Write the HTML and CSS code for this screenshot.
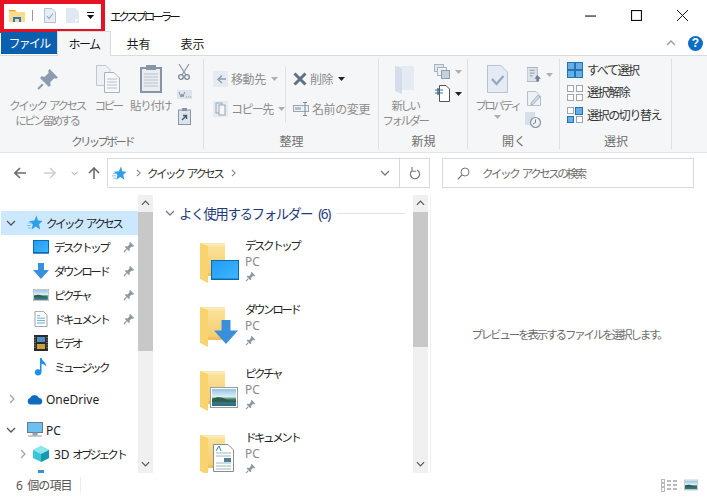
FILE: index.html
```html
<!DOCTYPE html>
<html lang="ja">
<head>
<meta charset="utf-8">
<title>エクスプローラー</title>
<link rel="stylesheet" href="styles.css">
</head>
<body>
<svg class="defs" aria-hidden="true">
  <defs>
    <linearGradient id="fb" x1="0" y1="0" x2="0" y2="1"><stop offset="0" stop-color="#fbe3a0"/><stop offset="1" stop-color="#f4cb68"/></linearGradient>
    <linearGradient id="bl" x1="0" y1="0" x2="1" y2="1"><stop offset="0" stop-color="#1f9cf5"/><stop offset="1" stop-color="#43b6ff"/></linearGradient>
    <linearGradient id="sky" x1="0" y1="0" x2="0" y2="1"><stop offset="0" stop-color="#8fc3e8"/><stop offset=".45" stop-color="#dfeef5"/><stop offset=".6" stop-color="#3f7f62"/><stop offset="1" stop-color="#2f6f92"/></linearGradient>
    <symbol id="folder" viewBox="0 0 40 40">
      <path d="M0 0H25V33H0Z" fill="url(#fb)"/>
      <path d="M0 0L8 3V40L0 36Z" fill="#f8d36f"/>
      <path d="M8 3L0 0H25V3Z" fill="#fbe9b4"/>
      <path d="M8 30H25V33H8Z" fill="#efc25f"/>
    </symbol>
    <symbol id="pin" viewBox="0 0 12 12">
      <path d="M7 .8L11.2 5 10 5.8 8.8 5.4 6.6 7.6 6.8 9.6 5.8 10 2 6.2 2.4 5.2 4.4 5.4 6.6 3.2 6.2 2Z" fill="#8f99a3"/>
      <path d="M3.6 8.2L1 11" stroke="#8f99a3" stroke-width="1.2"/>
    </symbol>
    <symbol id="picture" viewBox="0 0 28 21">
      <rect x=".5" y=".5" width="27" height="20" fill="#fff" stroke="#9c9c9c"/>
      <rect x="2" y="2" width="24" height="17" fill="url(#sky)"/>
      <path d="M2 12C8 9 12 10 18 13L26 14V15H2Z" fill="#2c5f4c"/>
    </symbol>
    <symbol id="star" viewBox="0 0 16 16">
      <path d="M9.5 .5L11 5.6 15.6 6 12 9.3 13.2 14.6 8.8 11.6 4.6 14.6 5.8 9.6 2 6.2 7.4 5.6Z" fill="#2f9fe8"/>
      <path d="M1 8H5M0 10.5H4M1 13H4.5" stroke="#7dc4f2" stroke-width="1"/>
    </symbol>
    <symbol id="arrow" viewBox="0 0 16 16">
      <path d="M5 0H11V7H16L8 16 0 7H5Z" fill="#3a8fdd"/>
    </symbol>
    <symbol id="doc" viewBox="0 0 16 20">
      <path d="M.5.5H11L15.5 5V19.5H.5Z" fill="#fff" stroke="#8c8c8c"/>
      <path d="M3 6H7M3 9H13M3 12H13M3 15H13" stroke="#3e9bc8"/>
    </symbol>
    <symbol id="chev-d" viewBox="0 0 10 6"><path d="M1 1L5 5 9 1" fill="none" stroke="currentColor" stroke-width="1.3"/></symbol>
    <symbol id="chev-r" viewBox="0 0 6 10"><path d="M1 1L5 5 1 9" fill="none" stroke="currentColor" stroke-width="1.3"/></symbol>
    <symbol id="chev-u" viewBox="0 0 10 6"><path d="M1 5L5 1 9 5" fill="none" stroke="currentColor" stroke-width="1.3"/></symbol>
    <symbol id="tri" viewBox="0 0 7 4"><path d="M0 0H7L3.5 4Z" fill="currentColor"/></symbol>
    <symbol id="pad" viewBox="0 0 16 16"><g fill="#69aee3" stroke="#1f75bd"><rect x=".5" y=".5" width="7" height="7"/><rect x="8.5" y=".5" width="7" height="7"/><rect x=".5" y="8.5" width="7" height="7"/><rect x="8.5" y="8.5" width="7" height="7"/></g></symbol>
    <symbol id="pad-o" viewBox="0 0 16 16"><g fill="#fff" stroke="#a5a5a5"><rect x=".5" y=".5" width="6" height="6"/><rect x="9.5" y=".5" width="6" height="6"/><rect x=".5" y="9.5" width="6" height="6"/><rect x="9.5" y="9.5" width="6" height="6"/></g></symbol>
    <symbol id="pad-i" viewBox="0 0 16 16"><g stroke="#a5a5a5" fill="#fff"><rect x=".5" y="9.5" width="6" height="6" fill="#69aee3" stroke="#1f75bd"/><rect x="9.5" y="9.5" width="6" height="6"/><rect x=".5" y=".5" width="6" height="6"/></g><rect x="8.5" y=".5" width="7" height="7" fill="#69aee3" stroke="#1f75bd"/></symbol>
  </defs>
</svg>

<div class="window">
  <header class="titlebar">
    <div class="qat">
      <svg class="i-qat-folder" viewBox="0 0 17 14"><path d="M0 1H6L8 3H16V13H0Z" fill="#f6cf6a"/><path d="M0 3H16V13H0Z" fill="#fbdc8c"/><path d="M0 1H6L7 2H0Z" fill="#e8a93a"/><path d="M4 13V8H12V13H10V10H6V13Z" fill="#2a78c2"/></svg>
      <span class="qat-sep"></span>
      <svg class="i-qat-doc" viewBox="0 0 12 15"><path d="M.5.5H8L11.5 4V14.5H.5Z" fill="#e6edf6" stroke="#b4c2d4"/><path d="M3 8L5 10.5 9 5.5" fill="none" stroke="#8fa6c0" stroke-width="1.1"/></svg>
      <svg class="i-qat-doc2" viewBox="0 0 13 15"><path d="M0 0H9L13 4V15H0Z" fill="#dfe8f3"/><path d="M9 15V11H13Z" fill="#f3f6fa"/></svg>
      <svg class="i-qat-tri" viewBox="0 0 7 7"><path d="M0 0H7V1H0ZM0 3H7L3.5 7Z" fill="#111"/></svg>
    </div>
    <div class="title">エクスプローラー</div>
    <div class="winbtns">
      <svg class="wb" viewBox="0 0 10 10"><path d="M0 5.5H10" stroke="#111"/></svg>
      <svg class="wb" viewBox="0 0 10 10"><rect x=".5" y=".5" width="9" height="9" fill="none" stroke="#111"/></svg>
      <svg class="wb" viewBox="0 0 10 10"><path d="M0 0L10 10M10 0L0 10" stroke="#111" stroke-width=".9"/></svg>
    </div>
  </header>

  <nav class="tabs">
    <div class="tab tab-file">ファイル</div>
    <div class="tab tab-home">ホーム</div>
    <div class="tab tab-share">共有</div>
    <div class="tab tab-view">表示</div>
    <div class="tabs-right">
      <svg class="i-ribbon-up"><use href="#chev-u"/></svg>
      <div class="help">?</div>
    </div>
  </nav>

  <div class="ribbon">
    <section class="group g1">
      <div class="group-body">
        <div class="big b-pin">
          <svg class="ic-pin" viewBox="0 0 20 20"><path d="M12 0L20 8 18.4 9.4 16.4 8.8 12.6 12.6 13 16 11.2 17 3 8.8 4 7 7.4 7.4 11.2 3.6 10.6 1.6Z" fill="#8c9bb0"/><path d="M5.5 14.5L1 19" stroke="#8c9bb0" stroke-width="2"/></svg>
          <div class="lbl tight">クイック アクセス<br>にピン留めする</div>
        </div>
        <div class="big b-copy">
          <svg class="ic-big" viewBox="0 0 24 28"><path d="M.5.5H10L14 4.5V20.5H.5Z" fill="#eef1f5" stroke="#c0c7d0"/><path d="M8.5 7.5H18L23.5 13V27.5H8.5Z" fill="#f7f8fa" stroke="#a9b2bd"/><path d="M11 14H21M11 17H21M11 20H21M11 23H21" stroke="#b8c0ca"/></svg>
          <div class="lbl tight">コピー</div>
        </div>
        <div class="big b-paste">
          <svg class="ic-big" viewBox="0 0 22 28"><rect x="1" y="3" width="20" height="24" fill="#e9edf2" stroke="#8795a8" stroke-width="2"/><rect x="6" y="0" width="10" height="5" fill="#8795a8"/><path d="M4 9H18M4 12H18M4 15H18M4 18H18M4 21H18" stroke="#b8c2cf"/></svg>
          <div class="lbl tight-kanji">貼り付け</div>
        </div>
        <div class="smallcol">
          <svg class="ic-cut" viewBox="0 0 12 16"><path d="M1 0L8 11M11 0L4 11" stroke="#8e99a6" stroke-width="1.2"/><circle cx="3" cy="13" r="2.3" fill="none" stroke="#7c8999" stroke-width="1.3"/><circle cx="9" cy="13" r="2.3" fill="none" stroke="#7c8999" stroke-width="1.3"/></svg>
          <svg class="ic-path" viewBox="0 0 15 9"><rect width="15" height="9" fill="#dfe4ea"/><path d="M2 2L4 7 5 4 6 7 7.6 2M9 7H10M11 7H12M13 7H14" stroke="#6f8096" fill="none" stroke-width=".8"/></svg>
          <svg class="ic-short" viewBox="0 0 13 17"><rect x=".5" y="2" width="12" height="14.5" fill="#dde3ea" stroke="#8795a8" stroke-width="1"/><rect x="4" y="0" width="5" height="3" fill="#8795a8"/><path d="M4 12L8 8M5 7.5H8.5V11" stroke="#49596c" stroke-width="1.4" fill="none"/></svg>
        </div>
      </div>
      <div class="group-label group-label-kana">クリップボード</div>
    </section>

    <section class="group g2">
      <div class="group-body">
        <div class="rows r-move">
          <div class="row">
            <svg class="ic-14" viewBox="0 0 15 16"><path d="M0 0H15V16H0Z" fill="#e6ebf1"/><path d="M13 8H6M9 4.5L5 8.5 9 12" stroke="#8ca0b6" stroke-width="1.5" fill="none"/></svg>
            <span class="lbl wide">移動先</span><svg class="tri"><use href="#tri"/></svg>
          </div>
          <div class="row">
            <svg class="ic-14" viewBox="0 0 15 16"><rect width="15" height="16" fill="#e6ebf1"/><rect x="3" y="2" width="6" height="10" fill="none" stroke="#9aa7b6"/><rect x="6" y="4" width="6" height="10" fill="#f4f6f8" stroke="#9aa7b6"/></svg>
            <span class="lbl wide wide-kana">コピー先</span><svg class="tri"><use href="#tri"/></svg>
          </div>
        </div>
        <span class="vsep"></span>
        <div class="rows r-del">
          <div class="row">
            <svg class="ic-x" viewBox="0 0 14 14"><path d="M1.5 1.5L12.5 12.5M12.5 1.5L1.5 12.5" stroke="#5f7184" stroke-width="3"/></svg>
            <span class="lbl wide">削除</span><svg class="tri tri-on"><use href="#tri"/></svg>
          </div>
          <div class="row">
            <svg class="ic-ren" viewBox="0 0 16 14"><rect x=".5" y="3.5" width="15" height="6" fill="#eef1f4" stroke="#9aa7b6"/><rect x="2" y="5" width="6" height="3" fill="#b4bfcb"/><path d="M10 .5H14M12 .5V13.5M10 13.5H14" stroke="#7d8b9b"/></svg>
            <span class="lbl wide">名前の変更</span>
          </div>
        </div>
      </div>
      <div class="group-label">整理</div>
    </section>

    <section class="group g3">
      <div class="group-body">
        <div class="big b-new">
          <svg class="ic-newf" viewBox="0 0 20 28"><path d="M0 0H19V24H0Z" fill="#e4ebf3"/><path d="M0 0L7 2.5V28L0 25Z" fill="#d3deea"/></svg>
          <div class="lbl tight">新しい<br>フォルダー</div>
        </div>
        <div class="smallcol2">
          <div class="sm-row">
            <svg class="ic-16" viewBox="0 0 16 15"><rect x=".5" y=".5" width="9" height="7" fill="#dfe5ec" stroke="#a9b4c1"/><rect x="3.5" y="3.5" width="9" height="8" fill="#eef1f5" stroke="#a9b4c1"/><rect x="7.5" y="6.5" width="8" height="8" fill="#c7d0da" stroke="#8f9cab"/></svg>
            <svg class="tri"><use href="#tri"/></svg>
          </div>
          <div class="sm-row">
            <svg class="ic-16b" viewBox="0 0 16 17"><path d="M5.5.5H12L15.5 4V16.5H5.5Z" fill="#fff" stroke="#555"/><path d="M1 5H9M1 8H9" stroke="#2a78c2"/><path d="M4 3V10" stroke="#333"/></svg>
            <svg class="tri tri-on"><use href="#tri"/></svg>
          </div>
        </div>
      </div>
      <div class="group-label">新規</div>
    </section>

    <section class="group g4">
      <div class="group-body">
        <div class="big b-prop">
          <svg class="ic-prop" viewBox="0 0 21 28"><path d="M.5.5H14L20.5 7V27.5H.5Z" fill="#e4ebf4" stroke="#b7c3d1"/><path d="M5 14L9.5 19 16.5 11" fill="none" stroke="#96a9bf" stroke-width="2.4"/></svg>
          <div class="lbl tight">プロパティ</div>
          <svg class="tri tri-center"><use href="#tri"/></svg>
        </div>
        <div class="smallcol3">
          <div class="sm-row">
            <svg class="ic-14b" viewBox="0 0 15 15"><rect width="11" height="15" fill="#dde3ea" stroke="#aab5c2"/><path d="M3 3H8M3 6H8M3 9H6" stroke="#8795a8"/><path d="M11 8L15 12H13V15H10V12H8Z" fill="#6e7f93"/></svg>
            <svg class="tri"><use href="#tri"/></svg>
          </div>
          <svg class="ic-14b" viewBox="0 0 14 15"><path d="M.5.5H9L13.5 5V14.5H.5Z" fill="#eef2f6" stroke="#b4c0cd"/><path d="M4 12L11 4 13 6 6 13.5H4Z" fill="#ccd6e1" stroke="#9aa8b8" stroke-width=".7"/></svg>
          <svg class="ic-16c" viewBox="0 0 16 16"><rect width="10" height="13" fill="#d7dfe8"/><circle cx="10.5" cy="10.5" r="5" fill="#eef1f4" stroke="#8695a6" stroke-width="1.2"/><path d="M10.5 7.5V10.5L8 12" stroke="#6e7f93" fill="none"/></svg>
        </div>
      </div>
      <div class="group-label">開く</div>
    </section>

    <section class="group g5">
      <div class="group-body">
        <div class="rows r-sel">
          <div class="row row-on"><svg class="ic-16p"><use href="#pad"/></svg><span class="lbl sel">すべて選択</span></div>
          <div class="row row-on"><svg class="ic-16p"><use href="#pad-o"/></svg><span class="lbl sel">選択解除</span></div>
          <div class="row row-on"><svg class="ic-16p"><use href="#pad-i"/></svg><span class="lbl sel">選択の切り替え</span></div>
        </div>
      </div>
      <div class="group-label">選択</div>
    </section>
  </div>

  <div class="addrbar">
    <div class="navbtns">
      <svg class="nb nb-back" viewBox="0 0 12 12"><path d="M12 6H1M6 1L1 6 6 11" fill="none" stroke="#6c6c6c" stroke-width="1.6"/></svg>
      <svg class="nb nb-fwd" viewBox="0 0 12 12"><path d="M0 6H11M6 1L11 6 6 11" fill="none" stroke="#d0d0d0" stroke-width="1.6"/></svg>
      <svg class="nb-chev"><use href="#chev-d"/></svg>
      <svg class="nb nb-up" viewBox="0 0 12 12"><path d="M6 12V1M1 6L6 1 11 6" fill="none" stroke="#6c6c6c" stroke-width="1.6"/></svg>
    </div>
    <div class="addr">
      <svg class="addr-star"><use href="#star"/></svg>
      <svg class="addr-c"><use href="#chev-r"/></svg>
      <span class="tight addr-text">クイック アクセス</span>
      <svg class="addr-c"><use href="#chev-r"/></svg>
      <svg class="addr-down"><use href="#chev-d"/></svg>
      <div class="addr-refresh">
        <svg class="i-refresh" viewBox="0 0 12 13"><path d="M6 2.5A4.6 4.6 0 1 1 1.6 6" transform="rotate(30 6 7)" fill="none" stroke="#777" stroke-width="1.2"/><path d="M3.4 0V4.4H7.6" transform="translate(-.4 -.2)" fill="none" stroke="#777" stroke-width="1.1"/></svg>
      </div>
    </div>
    <div class="search">
      <svg class="i-search" viewBox="0 0 13 13"><circle cx="8" cy="5" r="4" fill="none" stroke="#777"/><path d="M5 8L.7 12.3" stroke="#777" stroke-width="1.1"/></svg>
      <span class="tight search-text">クイック アクセスの検索</span>
    </div>
  </div>

  <main class="main">
    <aside class="navpane">
      <ul class="tree">
        <li class="t t-root t-selected"><svg class="exp-d"><use href="#chev-d"/></svg><svg class="ic-star"><use href="#star"/></svg><span class="tight">クイック アクセス</span></li>
        <li class="t t-child"><svg class="ti" viewBox="0 0 16 14"><rect x=".5" y=".5" width="15" height="12" fill="url(#bl)" stroke="#0b6ab0"/><path d="M0 13H16" stroke="#0b6ab0" stroke-width="1.5"/></svg><span class="tight">デスクトップ</span><svg class="tpin"><use href="#pin"/></svg></li>
        <li class="t t-child"><svg class="ti"><use href="#arrow"/></svg><span class="tight">ダウンロード</span><svg class="tpin"><use href="#pin"/></svg></li>
        <li class="t t-child"><svg class="ti"><use href="#picture"/></svg><span class="tight">ピクチャ</span><svg class="tpin"><use href="#pin"/></svg></li>
        <li class="t t-child"><svg class="ti"><use href="#doc"/></svg><span class="tight">ドキュメント</span><svg class="tpin"><use href="#pin"/></svg></li>
        <li class="t t-child"><svg class="ti" viewBox="0 0 14 16"><rect width="14" height="16" fill="#2a2a2a"/><rect x="3" y="2" width="8" height="5" fill="#4d8fc4"/><rect x="3" y="9" width="8" height="5" fill="#c9a23c"/><path d="M1 2V14M13 2V14" stroke="#bbb" stroke-dasharray="1 1.5"/></svg><span class="tight">ビデオ</span></li>
        <li class="t t-child"><svg class="ti ti-music" viewBox="0 0 12 17"><path d="M5 0H6.5C7 3 11 4 11 8 9.5 6 8 5.6 6.5 5.4V13.5A3.2 3 0 1 1 5 11Z" fill="#1e90e6"/></svg><span class="tight">ミュージック</span></li>
        <li class="t t-root t-drive"><svg class="exp-r"><use href="#chev-r"/></svg><svg class="ic-star" viewBox="0 0 16 10"><path d="M3.5 10A3.4 3.4 0 0 1 3 3.4 5 5 0 0 1 12 3.4 3.4 3.4 0 0 1 13 10Z" fill="#0f6cbd"/></svg><span>OneDrive</span></li>
        <li class="t t-root t-pc"><svg class="exp-d"><use href="#chev-d"/></svg><svg class="ic-star" viewBox="0 0 16 16"><rect x=".5" y=".5" width="15" height="10" fill="#6cc0f0" stroke="#6a7b8a"/><path d="M6 11H10V13H6ZM1 14H15" stroke="#8899a8" fill="#a7b4bf"/></svg><span>PC</span></li>
        <li class="t t-child t-sub"><svg class="exp-r"><use href="#chev-r"/></svg><svg class="ti" viewBox="0 0 16 16"><path d="M8 0L16 4V12L8 16 0 12V4Z" fill="#39c6d8"/><path d="M8 8L16 4V12L8 16Z" fill="#1797b0"/><path d="M8 8L0 4 8 0 16 4Z" fill="#8ee6ee"/></svg><span class="t-3d"><span class="latin">3D </span><span class="tight">オブジェクト</span></span></li>
        <li class="t t-child"><svg class="ti"><use href="#arrow"/></svg></li>
      </ul>
      <div class="sb">
        <svg class="sb-a"><use href="#chev-u"/></svg>
        <div class="sb-thumb sb-thumb-nav"></div>
        <div class="sb-rest"></div>
        <svg class="sb-a"><use href="#chev-d"/></svg>
      </div>
    </aside>

    <section class="content">
      <div class="list">
        <div class="group-head">
          <svg class="gh-chev"><use href="#chev-d"/></svg>
          <span class="gh-title">よく使用するフォルダー (6)</span>
          <span class="gh-line"></span>
        </div>
        <div class="item">
          <div class="thumb">
            <svg class="f"><use href="#folder"/></svg>
            <svg class="ov ov-desk" viewBox="0 0 28 20"><rect x=".5" y=".5" width="27" height="19" fill="url(#bl)" stroke="#0b6ab0"/><path d="M0 19H28" stroke="#0b6ab0"/></svg>
          </div>
          <div class="meta"><div class="name tight">デスクトップ</div><div class="sub">PC</div><svg class="mpin"><use href="#pin"/></svg></div>
        </div>
        <div class="item">
          <div class="thumb">
            <svg class="f"><use href="#folder"/></svg>
            <svg class="ov ov-down"><use href="#arrow"/></svg>
          </div>
          <div class="meta"><div class="name tight">ダウンロード</div><div class="sub">PC</div><svg class="mpin"><use href="#pin"/></svg></div>
        </div>
        <div class="item">
          <div class="thumb">
            <svg class="f"><use href="#folder"/></svg>
            <svg class="ov ov-pic"><use href="#picture"/></svg>
          </div>
          <div class="meta"><div class="name tight">ピクチャ</div><div class="sub">PC</div><svg class="mpin"><use href="#pin"/></svg></div>
        </div>
        <div class="item">
          <div class="thumb">
            <svg class="f"><use href="#folder"/></svg>
            <svg class="ov ov-doc" viewBox="0 0 21 28"><path d="M.5.5H15L20.5 6V27.5H.5Z" fill="#fff" stroke="#8c8c8c"/><path d="M3 9H18M3 12H18M3 19H18M3 22H18M3 25H18" stroke="#9db6c6"/><rect x="11" y="14" width="7" height="4" fill="#4d7f8f"/><path d="M3 7L6 2 8 7" stroke="#2b8bc7" fill="none"/></svg>
          </div>
          <div class="meta"><div class="name tight">ドキュメント</div><div class="sub">PC</div><svg class="mpin"><use href="#pin"/></svg></div>
        </div>
      </div>
      <div class="sb">
        <svg class="sb-a"><use href="#chev-u"/></svg>
        <div class="sb-thumb sb-thumb-list"></div>
        <div class="sb-rest"></div>
        <svg class="sb-a"><use href="#chev-d"/></svg>
      </div>
    </section>

    <section class="preview"><span class="tight">プレビューを表示するファイルを選択します。</span></section>
  </main>

  <footer class="status">
    <span class="count">6 個の項目</span>
    <span class="status-sep"></span>
    <div class="views">
      <svg class="v-details" viewBox="0 0 16 13"><path d="M.5.5H3.5V3.5H.5ZM.5 4.5H3.5V7.5H.5ZM.5 8.5H3.5V12.5H.5Z" fill="none" stroke="#777" stroke-dasharray="1 1"/><path d="M6 2H10M12 2H16M6 6H10M12 6H16M6 10H10M12 10H16" stroke="#777"/></svg>
      <svg class="v-tiles"><use href="#picture"/></svg>
    </div>
  </footer>
</div>

<div class="qat-highlight"></div>
</body>
</html>
```

FILE: styles.css
```css
* { box-sizing: border-box; }
html, body { margin: 0; padding: 0; }
body {
  width: 707px;
  height: 497px;
  overflow: hidden;
  background: #fff;
  font-family: "Noto Sans", "Noto Sans CJK JP", sans-serif;
  font-size: 12px;
  color: #1a1a1a;
  position: relative;
}
svg { display: block; flex: none; }
.defs { width: 0; height: 0; position: absolute; }
.window { display: flex; flex-direction: column; height: 497px; }

.tight { font-size: 11.5px; letter-spacing: -2.45px; word-spacing: 3px; white-space: nowrap; }
.tight-kanji { font-size: 11.5px; letter-spacing: -1.3px; white-space: nowrap; }
.latin { font-size: 12px; letter-spacing: -.2px; }
.t-3d .tight { letter-spacing: -2.7px; }

/* title bar */
.titlebar { height: 31px; display: flex; align-items: center; flex: none; }
.qat { display: flex; align-items: center; width: 110px; padding-left: 9px; }
.i-qat-folder { width: 17px; height: 14px; }
.qat-sep { width: 1px; height: 11px; background: #9a9a9a; margin: 0 0 0 6px; }
.i-qat-doc { width: 12px; height: 15px; margin-left: 11px; }
.i-qat-doc2 { width: 13px; height: 15px; margin-left: 10px; }
.i-qat-tri { width: 7px; height: 7px; margin-left: 8px; }
.title { font-size: 11.5px; letter-spacing: -3px; color: #111; white-space: nowrap; }
.winbtns { margin-left: auto; display: flex; gap: 35px; padding-right: 19px; }
.wb { width: 11px; height: 11px; }

/* tabs */
.tabs { height: 24px; display: flex; align-items: flex-end; flex: none; position: relative; z-index: 1; }
.tab { height: 23px; display: flex; align-items: center; justify-content: center; font-size: 12px; }
.tab-file { width: 56px; margin-left: 1px; background: #0a60ae; color: #fff; letter-spacing: -1.8px; height: 22px; margin-bottom: 1px; }
.tab-home { width: 54px; background: #f5f6f7; border: 1px solid #dadbdc; border-bottom: 0; letter-spacing: -1.5px; margin-bottom: -1px; height: 25px; }
.tab-share { width: 54px; padding-left: 1px; }
.tab-view { width: 54px; padding-left: 1px; }
.tabs-right { margin-left: auto; display: flex; align-items: center; gap: 12px; padding-right: 4px; height: 24px; }
.i-ribbon-up { width: 10px; height: 6px; color: #9c9c9c; }
.help { width: 15px; height: 15px; border-radius: 50%; background: #0a6fc4; color: #fff; font-family: "Liberation Sans", sans-serif; font-weight: 700; font-size: 12px; line-height: 15px; text-align: center; }

/* ribbon */
.ribbon { height: 98px; flex: none; display: flex; background: #f5f6f7; border-top: 1px solid #dadbdc; border-bottom: 1px solid #e4e5e6; }
.group { display: flex; flex-direction: column; padding: 3px 0 2px; position: relative; }
.group::after { content: ""; position: absolute; right: 0; top: 3px; bottom: 3px; width: 1px; background: #e0e1e2; }
.group-body { flex: 1; display: flex; min-height: 0; }
.group-label { text-align: center; font-size: 12px; line-height: 16px; color: #6f6f6f; white-space: nowrap; }
.group-label-kana { font-size: 11.5px; letter-spacing: -2.7px; }
.g1 { width: 204px; }
.g2 { width: 175px; }
.g3 { width: 89px; }
.g4 { width: 92px; }
.g5 { width: 112px; }
.lbl { color: #8c8c8c; line-height: 15px; white-space: nowrap; }
.big { display: flex; flex-direction: column; align-items: center; text-align: center; }
.big .lbl { margin-top: 9px; }
.ic-pin { width: 21px; height: 21px; margin-top: 10px; margin-bottom: 4px; }
.ic-big { width: 24px; height: 28px; margin-top: 6px; }
.b-pin { width: 84px; margin-left: 5px; }
.b-pin .lbl { margin-top: 4px; }
.b-copy { width: 38px; }
.b-copy .lbl { margin-top: 5px; }
.b-paste { width: 47px; margin-left: 0; }
.b-paste .lbl { margin-top: 5px; }
.b-paste .ic-big { width: 22px; }
.smallcol { display: flex; flex-direction: column; align-items: center; width: 18px; margin-left: 1px; padding-top: 5px; }
.ic-cut { width: 12px; height: 16px; }
.ic-path { width: 15px; height: 9px; margin-top: 10px; }
.ic-short { width: 13px; height: 17px; margin-top: 9px; }

.rows { display: flex; flex-direction: column; }
.row { display: flex; align-items: center; height: 30px; }
.lbl.wide { font-size: 12px; margin-left: 3px; letter-spacing: -.4px; }
.lbl.wide-kana { letter-spacing: -1.6px; }
.r-move { width: 81px; padding: 5px 0 0 9px; }
.vsep { width: 1px; height: 56px; background: #e0e1e2; margin-top: 8px; }
.r-del { padding: 5px 0 0 7px; }
.ic-14 { width: 15px; height: 16px; }
.ic-x { width: 14px; height: 14px; }
.ic-ren { width: 16px; height: 14px; }
.tri { width: 7px; height: 4px; color: #b0b0b0; margin-left: 5px; }
.tri-on { color: #222; }
.tri-center { margin: 2px auto 0; }

.b-new { width: 52px; }
.ic-newf { width: 20px; height: 28px; margin-top: 7px; }
.b-new .lbl { margin-top: 4px; }
.smallcol2 { padding: 5px 0 0 3px; display: flex; flex-direction: column; gap: 6px; }
.sm-row { display: flex; align-items: center; }
.ic-16 { width: 16px; height: 15px; }
.ic-16b { width: 16px; height: 17px; }

.b-prop { width: 59px; }
.ic-prop { width: 21px; height: 28px; margin-top: 6px; }
.b-prop .lbl { margin-top: 5px; }
.smallcol3 { padding-top: 8px; display: flex; flex-direction: column; gap: 9px; }
.ic-14b { width: 14px; height: 15px; }
.ic-16c { width: 16px; height: 16px; margin-left: -2px; margin-top: -3px; }

.r-sel { padding: 0 0 0 7px; }
.row-on { height: 22.5px; }
.ic-16p { width: 16px; height: 16px; }
.lbl.sel { color: #333; font-size: 12px; letter-spacing: -1.4px; margin-left: 4px; }

/* address bar */
.addrbar { height: 42px; flex: none; display: flex; align-items: flex-start; padding-top: 5px; }
.navbtns { display: flex; align-items: center; height: 30px; width: 107px; padding-left: 14px; }
.nb { width: 12px; height: 12px; }
.nb-fwd { margin-left: 18px; }
.nb-chev { width: 7px; height: 5px; margin-left: 15px; color: #9a9a9a; }
.nb-up { margin-left: 10px; }
.addr { width: 323px; height: 30px; display: flex; align-items: center; border: 1px solid #d9d9d9; padding-left: 4px; }
.addr-star { width: 15px; height: 15px; }
.addr-c { width: 5px; height: 8px; color: #7a7a7a; margin-left: 9px; }
.addr-text { margin-left: 6px; color: #333; }
.addr-down { width: 10px; height: 6px; color: #7a7a7a; margin-left: auto; }
.addr-refresh { width: 30px; height: 28px; margin-left: 9px; border-left: 1px solid #d9d9d9; display: flex; align-items: center; justify-content: center; }
.i-refresh { width: 12px; height: 13px; }
.search { width: 252px; height: 30px; margin-left: 12px; display: flex; align-items: center; border: 1px solid #d9d9d9; padding-left: 14px; color: #6d6d6d; }
.i-search { width: 13px; height: 13px; }
.search-text { margin-left: 12px; }

/* main */
.main { height: 278px; flex: none; display: flex; overflow: hidden; }
.navpane { width: 153px; display: flex; flex: none; }
.tree { list-style: none; margin: 0; padding: 16px 0 0; width: 138px; flex: none; overflow: hidden; }
.t { height: 24px; display: flex; align-items: center; color: #222; position: relative; }
.t-root { padding-left: 6px; }
.t-child { padding-left: 33px; }
.t-sub { padding-left: 17px; }
.t-selected { background: #cce8ff; margin-left: 1px; padding-left: 5px; }
.t-drive { margin-top: 8px; }
.t-pc { margin-top: 7px; }
.exp-d { width: 10px; height: 6px; color: #555; }
.exp-r { width: 6px; height: 10px; color: #a5a5a5; margin-left: 3px; margin-right: 1px; }
.ic-star { width: 16px; height: 16px; margin-left: 11px; margin-right: 3px; }
.t-drive .ic-star { height: 11px; }
.ti { width: 16px; height: 16px; margin-right: 5px; }
.ti-music { height: 18px; }
.t-sub .ti { margin-left: 6px; }
.tpin { width: 12px; height: 12px; position: absolute; left: 123px; top: 6px; }

.sb { width: 15px; flex: none; display: flex; flex-direction: column; align-items: center; background: #f0f0f0; height: 278px; }
.sb-a { width: 9px; height: 6px; margin: 5px 0 6px; color: #555; flex: none; }
.sb-thumb { width: 100%; background: #c8c8c8; flex: none; }
.sb-thumb-nav { height: 139px; }
.sb-thumb-list { height: 135px; }
.sb-rest { flex: 1; }

.content { width: 275px; display: flex; flex: none; }
.list { width: 260px; flex: none; overflow: hidden; }
.group-head { display: flex; align-items: center; height: 16px; margin: 10px 0 16px; padding-left: 12px; }
.gh-chev { width: 10px; height: 6px; color: #6b7a99; }
.gh-title { margin-left: 4px; font-size: 13.5px; letter-spacing: -1.4px; word-spacing: 4px; color: #1f3a7a; white-space: nowrap; }
.gh-line { flex: 1; height: 1px; background: #e2e2e2; margin: 0 8px 0 7px; }
.item { display: flex; height: 64px; padding-left: 47px; }
.thumb { width: 40px; height: 40px; margin-top: 6px; position: relative; flex: none; }
.f { width: 40px; height: 40px; }
.ov { position: absolute; }
.ov-desk { left: 11px; top: 17px; width: 28px; height: 20px; }
.ov-down { left: 14px; top: 13px; width: 24px; height: 24px; }
.ov-pic { left: 10px; top: 16px; width: 28px; height: 21px; }
.ov-doc { left: 13px; top: 9px; width: 21px; height: 28px; }
.meta { margin-left: 5px; padding-top: 1px; }
.name { height: 16px; line-height: 16px; color: #222; }
.sub { height: 16px; line-height: 16px; color: #8a8a8a; font-size: 12px; }
.mpin { width: 11px; height: 11px; margin-top: 1px; }

.preview { flex: 1; display: flex; align-items: center; justify-content: center; color: #6d6d6d; border-left: 1px solid #f0f0f0; margin-left: 2px; }
.preview .tight { letter-spacing: -2.15px; }

/* status */
.status { flex: 1; display: flex; align-items: center; padding-left: 16px; color: #555; }
.count { width: 64px; letter-spacing: -.9px; word-spacing: 3px; white-space: nowrap; }
.status-sep { width: 1px; height: 16px; background: #ececec; }
.views { margin-left: auto; display: flex; align-items: center; gap: 7px; padding-right: 9px; }
.v-details { width: 16px; height: 13px; }
.v-tiles { width: 14px; height: 12px; }

/* highlight drawn over the quick access toolbar */
.qat-highlight { position: absolute; left: 0; top: 0; width: 105px; height: 33px; border: 4px solid #e81123; }
```
